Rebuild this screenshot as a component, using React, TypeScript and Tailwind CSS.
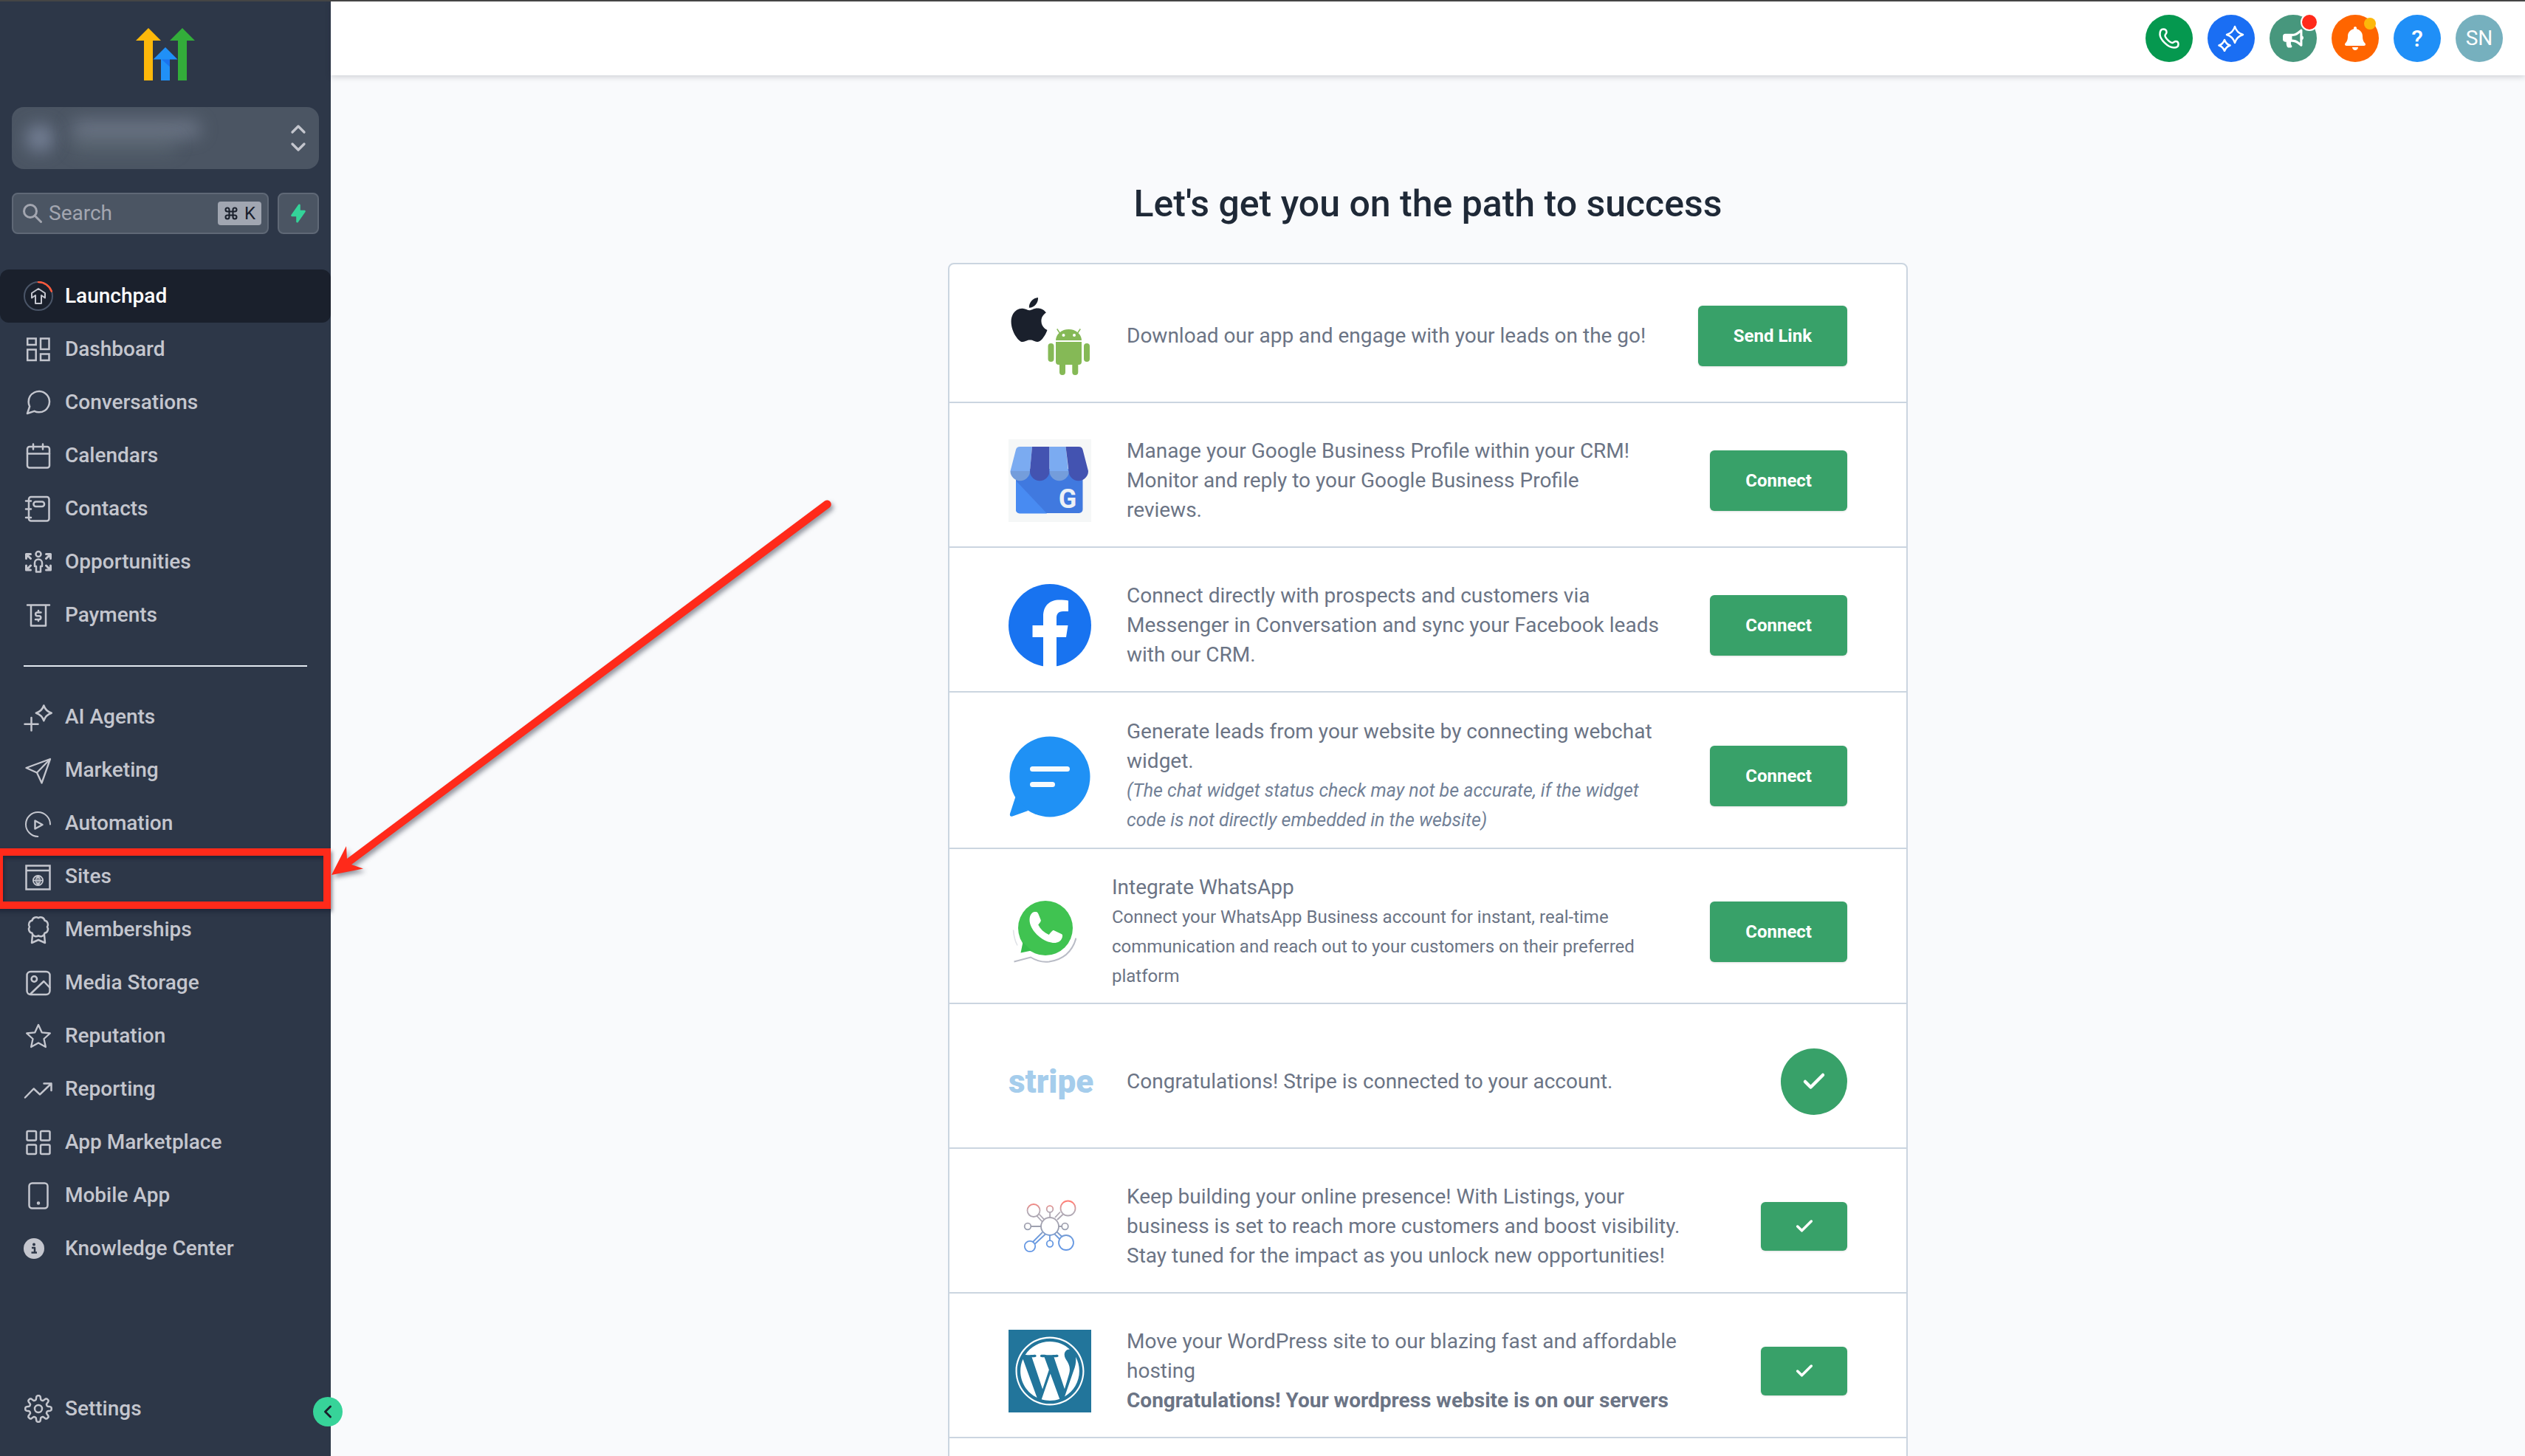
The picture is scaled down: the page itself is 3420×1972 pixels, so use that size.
import React from 'react';
import { Check, ChevronDown, ChevronLeft, ChevronUp, Command } from 'lucide-react';
import { FaBell, FaBullhorn, FaWordpress } from 'react-icons/fa';
import { HiLightningBolt } from 'react-icons/hi';
import { SiApple } from 'react-icons/si';

interface NavItem {
  label: string;
  icon: React.ReactNode;
  active?: boolean;
  highlighted?: boolean;
}

interface Task {
  id: string;
  logo: React.ReactNode;
  body: React.ReactNode;
  action: React.ReactNode;
  height: string;
}

function NavIcon({ children }: { children: React.ReactNode }) {
  return (
    <svg
      viewBox="0 0 40 40"
      className="size-10 shrink-0"
      fill="none"
      stroke="currentColor"
      strokeWidth="2.5"
      strokeLinecap="round"
      strokeLinejoin="round"
      aria-hidden="true"
    >
      {children}
    </svg>
  );
}

// eight rounded teeth around the centre
const gearPath = (() => {
  const points: string[] = [];
  for (let deg = 0; deg < 360; deg += 3) {
    const a = (deg * Math.PI) / 180;
    const r = 15 + 2.8 * Math.tanh(2.2 * Math.cos(8 * a));
    points.push(`${(20 + r * Math.cos(a)).toFixed(2)} ${(20 + r * Math.sin(a)).toFixed(2)}`);
  }
  return `M${points.join('L')}Z`;
})();

const mainNav: NavItem[] = [
  {
    label: 'Launchpad',
    active: true,
    icon: (
      <NavIcon>
        <circle cx="20" cy="20" r="19" stroke="#4a5568" strokeWidth="2" />
        <path d="M20 1a19 19 0 0 1 17.8 12.5" stroke="#ff5a3c" strokeWidth="2.5" />
        <path d="M20 10 29 16v6.5l-5-3.5V30h-8V19l-5 3.5V16z" stroke="#c4c6ce" strokeWidth="2" />
      </NavIcon>
    ),
  },
  {
    label: 'Dashboard',
    icon: (
      <NavIcon>
        <g strokeLinejoin="miter">
          <path d="M5.2 5.5h11.5v8.5H5.2zM23 5.5h11.5V20H23zM5.2 20.5h11.5V35H5.2zM23 26.5h11.5V35H23z" />
        </g>
      </NavIcon>
    ),
  },
  {
    label: 'Conversations',
    icon: (
      <NavIcon>
        <path
          transform="scale(1.6667)"
          strokeWidth="1.5"
          d="M21 11.5a8.38 8.38 0 0 1-.9 3.8 8.5 8.5 0 0 1-7.6 4.7 8.38 8.38 0 0 1-3.8-.9L3 21l1.9-5.7a8.38 8.38 0 0 1-.9-3.8 8.5 8.5 0 0 1 4.7-7.6 8.38 8.38 0 0 1 3.8-.9h.5a8.48 8.48 0 0 1 8 8v.5z"
        />
      </NavIcon>
    ),
  },
  {
    label: 'Calendars',
    icon: (
      <NavIcon>
        <rect x="5" y="8" width="30" height="28.5" rx="3" />
        <path d="M13 4.5v7M26 4.5v7M5 17.5h30" />
      </NavIcon>
    ),
  },
  {
    label: 'Contacts',
    icon: (
      <NavIcon>
        <rect x="7" y="4" width="27.5" height="32.5" rx="3" />
        <rect x="13.5" y="10.5" width="14.5" height="6.5" rx="3" />
        <path d="M3 9.5h7M3 20.5h7M3 32h7" />
      </NavIcon>
    ),
  },
  {
    label: 'Opportunities',
    icon: (
      <NavIcon>
        <circle cx="20" cy="9.5" r="3.5" />
        <path d="M17 33.5V26h-2v-4.5a5 5 0 0 1 10 0V26h-2v7.5z" />
        <path
          strokeWidth="3"
          d="M3.5 15.5V9.5h6M3.5 9.5l6 6M36.5 15.5V9.5h-6M36.5 9.5l-6 6M3.5 25v6h6M3.5 31l6-6M36.5 25v6h-6M36.5 31l-6-6"
        />
      </NavIcon>
    ),
  },
  {
    label: 'Payments',
    icon: (
      <NavIcon>
        <path d="M5 6.5h30M10 6.5V34.5h20V6.5" />
        <path d="M23.5 16.5h-5a2.3 2.3 0 0 0 0 4.7h2.5a2.3 2.3 0 0 1 0 4.7h-5M20 14v2.5M20 26v2" />
      </NavIcon>
    ),
  },
];

const secondaryNav: NavItem[] = [
  {
    label: 'AI Agents',
    icon: (
      <NavIcon>
        <path d="M10.5 21v17.5M1.5 29.7h18" />
        <path d="M27.3 4.5q2.5 7.7 10.5 10.2-8 2.5-10.5 10.5-2.5-8-10.5-10.5 8-2.5 10.5-10.2z" />
      </NavIcon>
    ),
  },
  {
    label: 'Marketing',
    icon: (
      <NavIcon>
        <path strokeWidth="2.3" d="M36 5 3.5 17 18 23.5 24.5 37.5zM36 5 18 23.5" />
      </NavIcon>
    ),
  },
  {
    label: 'Automation',
    icon: (
      <NavIcon>
        <path strokeWidth="2" d="M19.3 38A16.5 16.5 0 1 1 36 21.5" />
        <path d="M15.5 16.5v11l10-5.5z" />
      </NavIcon>
    ),
  },
  {
    label: 'Sites',
    highlighted: true,
    icon: (
      <NavIcon>
        <path strokeLinejoin="miter" d="M3.5 5.5h32v32h-32zM3.5 12h32" />
        <circle cx="19.5" cy="25.5" r="6.5" strokeWidth="2" />
        <path strokeWidth="1.5" d="M13 25.5h13M19.5 19v13M19.5 19q-6 6.5 0 13M19.5 19q6 6.5 0 13" />
      </NavIcon>
    ),
  },
  {
    label: 'Memberships',
    icon: (
      <NavIcon>
        <path d="M20 4.3a5.5 5.5 0 0 1 8.5 3.5 5.5 5.5 0 0 1 3.5 8.5 5.5 5.5 0 0 1-3.5 8.5A5.5 5.5 0 0 1 20 28.3a5.5 5.5 0 0 1-8.5-3.5A5.5 5.5 0 0 1 8 16.3a5.5 5.5 0 0 1 3.5-8.5A5.5 5.5 0 0 1 20 4.3z" />
        <path d="M12 27.5 11 38l9-4 9 4-1-10.5" />
      </NavIcon>
    ),
  },
  {
    label: 'Media Storage',
    icon: (
      <NavIcon>
        <rect x="4.5" y="5" width="31" height="31" rx="5" />
        <circle cx="14.3" cy="15" r="3.7" />
        <path d="M9.5 35 27.3 18l8 8.5" />
      </NavIcon>
    ),
  },
  {
    label: 'Reputation',
    icon: (
      <NavIcon>
        <path
          transform="scale(1.6667)"
          strokeWidth="1.4"
          d="M12 3l2.8 6.2 6.7.7-5 4.5 1.4 6.6L12 17.7 6.1 21l1.4-6.6-5-4.5 6.7-.7z"
        />
      </NavIcon>
    ),
  },
  {
    label: 'Reporting',
    icon: (
      <NavIcon>
        <path d="M2 31.5 13.7 19.5 22 27.3 37.5 12.5M27.5 12.5h10v9.5" />
      </NavIcon>
    ),
  },
  {
    label: 'App Marketplace',
    icon: (
      <NavIcon>
        <rect x="4.5" y="5" width="12.5" height="12.5" rx="1.5" />
        <rect x="23" y="5" width="12.5" height="12.5" rx="1.5" />
        <rect x="4.5" y="23.5" width="12.5" height="12.5" rx="1.5" />
        <rect x="23" y="23.5" width="12.5" height="12.5" rx="1.5" />
      </NavIcon>
    ),
  },
  {
    label: 'Mobile App',
    icon: (
      <NavIcon>
        <rect x="7.5" y="3.5" width="25" height="34" rx="4" />
        <circle cx="20" cy="30.5" r="1" />
      </NavIcon>
    ),
  },
  {
    label: 'Knowledge Center',
    icon: (
      <NavIcon>
        <circle cx="14" cy="20" r="14" fill="currentColor" stroke="none" />
        <circle cx="14" cy="14.5" r="2" fill="#2d3748" stroke="none" />
        <path stroke="#2d3748" strokeLinecap="butt" strokeWidth="2.5" d="M11 19h4v6.5M10.5 25.5h7.5" />
      </NavIcon>
    ),
  },
];

function HighLevelLogo() {
  return (
    <svg viewBox="0 0 80 71" className="w-20" aria-hidden="true">
      <path fill="#fdb80a" d="M17 0 34 17H23v54H11V17H0z" />
      <path fill="#33ad3a" d="M63 0 80 17H69v54H57V17H46z" />
      <path fill="#2090f7" d="M40 26 56.5 42.5H46V71H34V42.5H23.5z" />
      <path fill="#1a73ee" d="M35 42.5h11v10z" />
    </svg>
  );
}

function NavLink({ item }: { item: NavItem }) {
  return (
    <li className="relative">
      <a
        href="#"
        className={
          item.active
            ? 'flex h-18 items-center gap-4 rounded-xl bg-[#1a202c] px-8 text-white'
            : 'flex h-18 items-center gap-4 px-8'
        }
      >
        {item.icon}
        {item.label}
      </a>
      {item.highlighted && (
        <>
          <div className="pointer-events-none absolute -top-0.5 right-0 -bottom-2 -left-1.5 z-10 border-10 border-[#ff2a1a] shadow-[2px_4px_5px_rgba(20,25,45,0.5),inset_2px_4px_4px_rgba(20,25,45,0.5)]" />
          <svg
            viewBox="0 0 700 540"
            className="pointer-events-none absolute bottom-6 left-full z-10 w-[700px] drop-shadow-[3px_4px_3px_rgba(20,25,45,0.45)]"
            aria-hidden="true"
          >
            <path
              fill="#ff2a1a"
              d="M1 526 21 487l1 17L669 19.5a5.5 5.5 0 0 1 6.5 9L28 512l16 5.5z"
            />
          </svg>
        </>
      )}
    </li>
  );
}

function Sidebar() {
  return (
    <aside className="relative flex w-[448px] shrink-0 flex-col bg-[#2d3748] text-[28px] font-medium text-[#c4c6ce]">
      <div className="flex justify-center pt-9">
        <HighLevelLogo />
      </div>

      <button
        type="button"
        aria-label="Switch account"
        className="relative mx-4 mt-9 flex h-[84px] items-center justify-end overflow-hidden rounded-2xl bg-[#4b5563] pr-3"
      >
        <span className="absolute top-6 left-5 size-9 rounded-full bg-[#8d99b3] opacity-70 blur-md" />
        <span className="absolute top-5 left-20 h-5 w-44 rounded-full bg-[#8d96aa] opacity-60 blur-md" />
        <span className="absolute top-11 left-20 h-4 w-36 rounded-full bg-[#77868c] opacity-40 blur-md" />
        <span className="flex flex-col -space-y-2">
          <ChevronUp className="size-8" strokeWidth={2.5} />
          <ChevronDown className="size-8" strokeWidth={2.5} />
        </span>
      </button>

      <div className="mx-4 mt-8 flex gap-3">
        <label className="flex h-14 min-w-0 flex-1 items-center gap-2 rounded-lg border-2 border-[#5f6876] bg-[#4b5563] pr-2 pl-3 text-[#a3a6b0]">
          <svg viewBox="0 0 28 28" className="size-7 shrink-0" fill="none" stroke="currentColor" strokeWidth="3">
            <circle cx="11" cy="11" r="8.5" />
            <path d="M17 17l8.5 8.5" strokeLinecap="round" />
          </svg>
          <input
            type="text"
            aria-label="Search"
            placeholder="Search"
            className="min-w-0 flex-1 bg-transparent font-normal outline-none placeholder:text-[#a3a6b0]"
          />
          <kbd className="flex h-8 items-center gap-2 rounded bg-[#a1a6b1] px-2 font-[Roboto] text-2xl font-normal text-[#1a202c]">
            <Command className="size-5" strokeWidth={2.5} />K
          </kbd>
        </label>
        <button
          type="button"
          aria-label="Quick actions"
          className="flex size-14 items-center justify-center rounded-lg border-2 border-[#5f6876] bg-[#4b5563] text-[#34d399]"
        >
          <HiLightningBolt className="size-7" />
        </button>
      </div>

      <nav className="mt-12 flex flex-1 flex-col">
        <ul>
          {mainNav.map((item) => (
            <NavLink key={item.label} item={item} />
          ))}
        </ul>
        <hr className="mx-8 my-8 border-t-2 border-[#e2e8f0]" />
        <ul>
          {secondaryNav.map((item) => (
            <NavLink key={item.label} item={item} />
          ))}
        </ul>
        <a href="#" className="mt-auto mb-7 flex h-18 items-center gap-4 px-8">
          <NavIcon>
            <path d={gearPath} />
            <circle cx="20" cy="20" r="5" />
          </NavIcon>
          Settings
        </a>
      </nav>

      <button
        type="button"
        aria-label="Collapse sidebar"
        className="absolute -right-4 bottom-10 z-10 flex size-10 items-center justify-center rounded-full bg-[#37d399] text-[#1a202c]"
      >
        <ChevronLeft className="size-7" strokeWidth={2.5} />
      </button>
    </aside>
  );
}

function Header() {
  return (
    <header className="relative flex h-[100px] shrink-0 items-center justify-end gap-5 bg-white px-[30px] text-white shadow-[0_2px_8px_rgba(30,35,50,0.2)]">
      <button type="button" aria-label="Call" className="flex size-16 items-center justify-center rounded-full bg-[#05984f]">
        <svg viewBox="0 0 28 28" className="size-7" fill="none" stroke="currentColor" strokeWidth="2.5">
          <path d="M1.5 8.5C1.5 4 3 1.5 6 1.5c3 0 4.5 1.5 4.500 4.300 0 2-2 2.500-2 4.500 0 3 6.500 9.500 9.700 9.700 2 0 2.500-2 4.800-2 2 0 3.500 1.500 3.500 4 0 3-2.500 4.500-6 4.500C12 26.500 1.500 15 1.500 8.500z" />
        </svg>
      </button>
      <button type="button" aria-label="AI assistant" className="flex size-16 items-center justify-center rounded-full bg-[#1a6ef3]">
        <svg viewBox="0 0 36 36" className="size-9" fill="none" stroke="currentColor" strokeWidth="2.5" strokeLinejoin="round">
          <path d="M23 2q2.500 8.500 11 11-8.500 2.500-11 11-2.500-8.500-11-11 8.500-2.500 11-11z" />
          <path d="M9 20q2 5.500 7.500 7.500-5.500 2-7.500 7.500-2-5.500-7.500-7.500Q7 25.500 9 20z" />
        </svg>
      </button>
      <button type="button" aria-label="Announcements" className="relative flex size-16 items-center justify-center rounded-full bg-[#47977d]">
        <FaBullhorn className="size-7" />
        <span className="absolute -top-0.5 -right-0.5 size-6 rounded-full border-2 border-white bg-[#ff2a1a]" />
      </button>
      <button type="button" aria-label="Notifications" className="relative flex size-16 items-center justify-center rounded-full bg-[#ff6500]">
        <FaBell className="size-8" />
        <span className="absolute top-1 right-1 size-4 rounded-full bg-[#fdb80a]" />
      </button>
      <button type="button" aria-label="Help" className="flex size-16 items-center justify-center rounded-full bg-[#1f8ff7] text-[32px] font-medium">
        ?
      </button>
      <button type="button" className="flex size-16 items-center justify-center rounded-full bg-[#76b0be] text-[28px]">
        SN
      </button>
    </header>
  );
}

function ActionButton({ children }: { children: React.ReactNode }) {
  return (
    <button
      type="button"
      className="h-[82px] rounded-md bg-[#38a169] px-12 text-2xl font-bold text-white shadow-sm hover:bg-[#2f855a]"
    >
      {children}
    </button>
  );
}

function DoneButton() {
  return (
    <button
      type="button"
      aria-label="Completed"
      className="flex h-[66px] w-[117px] items-center justify-center rounded-md bg-[#38a169] text-white shadow-sm"
    >
      <Check className="size-7" strokeWidth={3} />
    </button>
  );
}

function MobileLogo() {
  return (
    <div className="relative size-28">
      <SiApple className="absolute -left-0.5 top-1 size-[60px] text-[#1a202c]" />
      <svg viewBox="0 0 112 112" className="size-28" fill="#85b956" aria-hidden="true">
        <path d="M64 62a17.5 15 0 0 1 35 0z" />
        <path d="M65.7 46.5l4 6M97.3 46.5l-4 6" stroke="#85b956" strokeWidth="1.5" />
        <circle cx="74.5" cy="55" r="2" fill="#fff" />
        <circle cx="89" cy="55" r="2" fill="#fff" />
        <path d="M64 64h35v27a4 4 0 0 1-4 4h-.7v10a4 4 0 0 1-8 0V95H77v10a4 4 0 0 1-8 0V95h-1a4 4 0 0 1-4-4z" />
        <rect x="53.5" y="66" width="8" height="25" rx="4" />
        <rect x="102" y="66" width="8" height="25" rx="4" />
      </svg>
    </div>
  );
}

function GoogleBusinessLogo() {
  return (
    <svg viewBox="0 0 112 112" className="size-28" aria-hidden="true">
      <path fill="#f5f7f7" d="M0 0h112v112H0z" />
      <path fill="#4079df" d="M10 40h90.5v55a5 5 0 0 1-5 5H15a5 5 0 0 1-5-5z" />
      <path fill="#488bf2" d="M10 56l42 44.500H15a5 5 0 0 1-5-5z" />
      <path fill="#7babf1" d="M15.500 10H32l-3 33H2.500L10 14q1-4 5.500-4z" />
      <path fill="#749ddb" d="M2.500 43H29a13.200 13.200 0 0 1-26.500 0z" />
      <path fill="#4353b1" d="M32 10h23.500v33a13.200 13.200 0 0 1-26.500 0z" />
      <path fill="#7babf1" d="M55.500 10h22L81 43H55.500z" />
      <path fill="#749ddb" d="M55.500 43H82a13.200 13.200 0 0 1-26.500 0z" />
      <path fill="#4353b1" d="M77.500 10h17.500q4.500 0 5.500 4L108 43a13.200 13.200 0 0 1-26.500 0z" />
      <text x="80" y="93" textAnchor="middle" fill="#edf1f6" fontSize="36" fontWeight="700">
        G
      </text>
    </svg>
  );
}

function FacebookLogo() {
  return (
    <svg viewBox="0 0 112 112" className="size-28" aria-hidden="true">
      <circle cx="56" cy="56" r="56" fill="#1873f0" />
      <path
        fill="#fff"
        d="M47 112V72H32.500V56H47V44c0-14.500 8.500-22.500 22-22.500 4.500 0 9 .4 12 1V37h-7c-7 0-9 4-9 9v10h15.500L78 72H65v40z"
      />
    </svg>
  );
}

function ChatLogo() {
  return (
    <svg viewBox="0 0 112 112" className="size-28" aria-hidden="true">
      <circle cx="56" cy="57" r="54.5" fill="#1f91f5" />
      <path fill="#1f91f5" d="M9.500 84 2 107q-1 4.500 3.500 3.500l21-7.500z" />
      <path stroke="#f7fafc" strokeWidth="7" strokeLinecap="round" d="M32.500 46.500h47M32.500 67.500h27" />
    </svg>
  );
}

function WhatsAppLogo() {
  return (
    <svg viewBox="0 0 92 92" className="size-[92px]" fill="none" aria-hidden="true">
      <path stroke="#b9bcc6" strokeWidth="2" d="M91.500 54.500Q84 82 55 86.500q-13 1.500-25-6L7.500 86.500" />
      <path stroke="#dfe1e6" strokeWidth="1.5" d="M6.500 43.500q1 13 5.500 21" />
      <circle cx="50" cy="41" r="37" fill="#40c351" />
      <path fill="#36bd4b" d="M19.500 60 16.500 74.500 31 71.500z" />
      <path
        fill="#fff"
        d="M28.500 30c0-7 3.500-11 7-11 3 0 4 .5 5 3l3.200 8c.5 1.500-.5 3-3.500 6.500 3 6 8 10.500 14.500 13.500 2-2.500 3.500-4.500 5-5.500 1-.7 2-.3 3 .2l9 4.400c1 .6 1.500 1 1.400 2.400-.5 6-5 9.500-11.500 9.500-5 0-15-3-23-11-7-7-10.100-14.500-10.100-20z"
      />
    </svg>
  );
}

function ListingsLogo() {
  return (
    <svg viewBox="0 0 112 112" className="size-28" aria-hidden="true">
      <defs>
        <linearGradient id="listings" gradientUnits="userSpaceOnUse" x1="0" y1="20" x2="0" y2="92">
          <stop offset="0.05" stopColor="#ff8078" />
          <stop offset="0.22" stopColor="#b5abb5" />
          <stop offset="0.55" stopColor="#9a9eae" />
          <stop offset="0.7" stopColor="#6b9ade" />
          <stop offset="1" stopColor="#6296e6" />
        </linearGradient>
      </defs>
      <g stroke="url(#listings)" strokeWidth="1.8" fill="none">
        <path d="M38.500 42l7.500 8M41.500 39.500l7.500 8M74 39.500l-8 7.500M70 36.500l-7 7.500M33 77l13-13M36 79.500l14-13M62 66l8 8M65.500 63.500l8 7.500M30.500 56h13.500M68 56h4.500M56.100 37v7M55.900 68v7.500" />
        <g fill="#fff">
          <circle cx="56" cy="56" r="12" />
          <circle cx="34" cy="34.5" r="8.5" />
          <circle cx="80.5" cy="31.5" r="10" />
          <circle cx="56" cy="32.5" r="4.3" />
          <circle cx="26" cy="56" r="4.3" />
          <circle cx="76.5" cy="56" r="4.3" />
          <circle cx="29" cy="83" r="7.2" />
          <circle cx="56" cy="79.5" r="4.3" />
          <circle cx="78" cy="78" r="10" />
        </g>
      </g>
    </svg>
  );
}

const tasks: Task[] = [
  {
    id: 'mobile',
    height: 'min-h-[188px] pt-2',
    logo: <MobileLogo />,
    body: 'Download our app and engage with your leads on the go!',
    action: <ActionButton>Send Link</ActionButton>,
  },
  {
    id: 'google',
    height: 'min-h-[196px] pt-4',
    logo: <GoogleBusinessLogo />,
    body: (
      <>
        Manage your Google Business Profile within your CRM!
        <br />
        Monitor and reply to your Google Business Profile
        <br />
        reviews.
      </>
    ),
    action: <ActionButton>Connect</ActionButton>,
  },
  {
    id: 'facebook',
    height: 'min-h-[196px] pt-4',
    logo: <FacebookLogo />,
    body: (
      <>
        Connect directly with prospects and customers via
        <br />
        Messenger in Conversation and sync your Facebook leads
        <br />
        with our CRM.
      </>
    ),
    action: <ActionButton>Connect</ActionButton>,
  },
  {
    id: 'webchat',
    height: 'min-h-[212px] pt-4',
    logo: <ChatLogo />,
    body: (
      <>
        Generate leads from your website by connecting webchat
        <br />
        widget.
        <em className="block text-[25px] leading-10 text-[#718096]">
          (The chat widget status check may not be accurate, if the widget
          <br />
          code is not directly embedded in the website)
        </em>
      </>
    ),
    action: <ActionButton>Connect</ActionButton>,
  },
  {
    id: 'whatsapp',
    height: 'min-h-[210px] pt-4',
    logo: <WhatsAppLogo />,
    body: (
      <>
        Integrate WhatsApp
        <span className="block text-2xl leading-10">
          Connect your WhatsApp Business account for instant, real-time
          <br />
          communication and reach out to your customers on their preferred
          <br />
          platform
        </span>
      </>
    ),
    action: <ActionButton>Connect</ActionButton>,
  },
  {
    id: 'stripe',
    height: 'min-h-[196px] pt-4',
    logo: <div className="w-28 text-center text-[44px] leading-none font-black text-[#a5cdec]">stripe</div>,
    body: 'Congratulations! Stripe is connected to your account.',
    action: (
      <span className="flex size-[90px] items-center justify-center rounded-full bg-[#38a169] text-white">
        <Check className="size-9" strokeWidth={3} />
      </span>
    ),
  },
  {
    id: 'listings',
    height: 'min-h-[196px] pt-4',
    logo: <ListingsLogo />,
    body: (
      <>
        Keep building your online presence! With Listings, your
        <br />
        business is set to reach more customers and boost visibility.
        <br />
        Stay tuned for the impact as you unlock new opportunities!
      </>
    ),
    action: <DoneButton />,
  },
  {
    id: 'wordpress',
    height: 'min-h-[196px] pt-4',
    logo: (
      <div className="flex size-28 items-center justify-center bg-[#22759b] text-white">
        <FaWordpress className="size-24" />
      </div>
    ),
    body: (
      <>
        Move your WordPress site to our blazing fast and affordable
        <br />
        hosting
        <br />
        <strong className="font-bold">Congratulations! Your wordpress website is on our servers</strong>
      </>
    ),
    action: <DoneButton />,
  },
];

export default function App() {
  return (
    <div className="flex h-screen overflow-hidden border-t-2 border-[#454545] bg-[#f9fafc] font-[Roboto,sans-serif]">
      <Sidebar />
      <div className="flex min-w-0 flex-1 flex-col">
        <Header />
        <main className="flex-1 overflow-hidden px-8 pt-[142px]">
          <h1 className="text-center text-[50px] leading-16 font-medium text-[#1f2937]">
            Let's get you on the path to success
          </h1>
          <ul className="mx-auto mt-12 max-w-[1300px] rounded-lg border-2 border-[#cbd5e0] bg-white pb-24">
            {tasks.map((task) => (
              <li
                key={task.id}
                className={`flex items-center gap-12 border-b-2 border-[#cbd5e0] px-20 ${task.height}`}
              >
                <div className="shrink-0">{task.logo}</div>
                <div className="flex-1 text-[28px] leading-10 whitespace-nowrap text-[#6b7485]">{task.body}</div>
                <div className="shrink-0">{task.action}</div>
              </li>
            ))}
          </ul>
        </main>
      </div>
    </div>
  );
}
